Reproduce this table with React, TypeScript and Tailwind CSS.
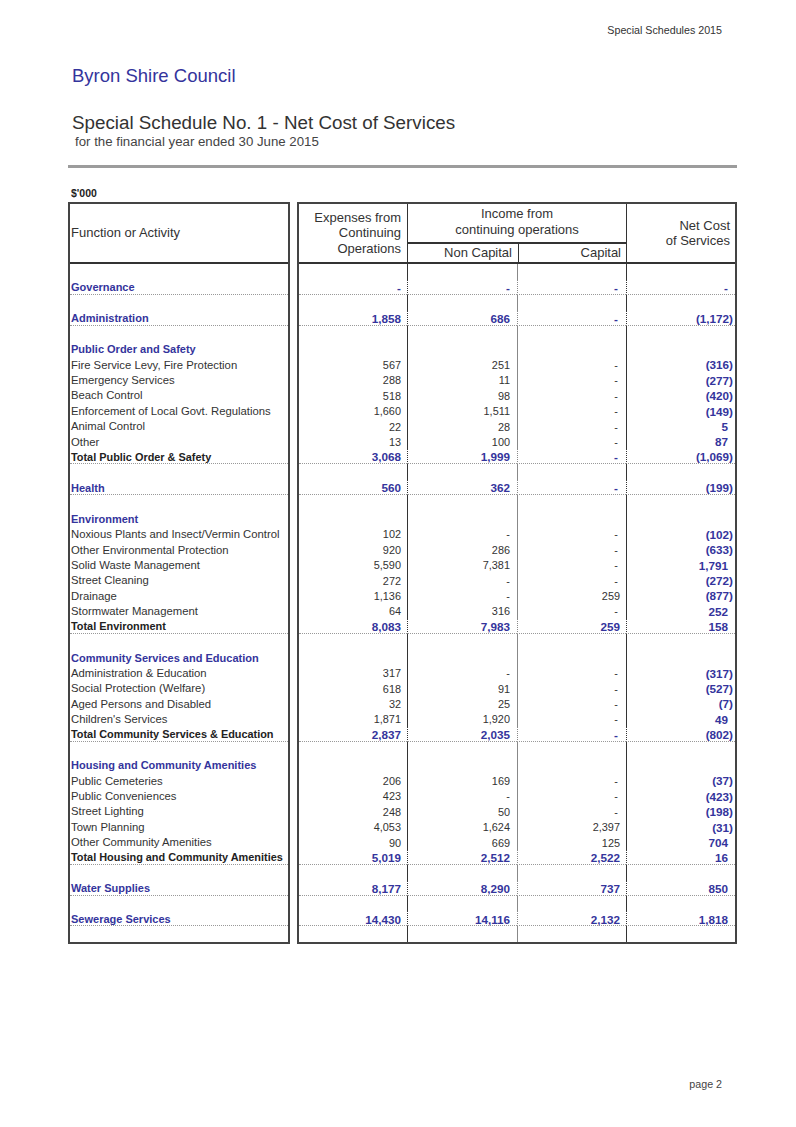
type Kind = "blank" | "major" | "section" | "item" | "total"

type Row = {
  k: Kind
  label?: string
  v?: [string, string, string, string]
}

const rows: Row[] = [
  { k: "blank" },
  { k: "major", label: "Governance", v: ["-", "-", "-", "-"] },
  { k: "blank" },
  { k: "major", label: "Administration", v: ["1,858", "686", "-", "(1,172)"] },
  { k: "blank" },
  { k: "section", label: "Public Order and Safety" },
  { k: "item", label: "Fire Service Levy, Fire Protection", v: ["567", "251", "-", "(316)"] },
  { k: "item", label: "Emergency Services", v: ["288", "11", "-", "(277)"] },
  { k: "item", label: "Beach Control", v: ["518", "98", "-", "(420)"] },
  { k: "item", label: "Enforcement of Local Govt. Regulations", v: ["1,660", "1,511", "-", "(149)"] },
  { k: "item", label: "Animal Control", v: ["22", "28", "-", "5"] },
  { k: "item", label: "Other", v: ["13", "100", "-", "87"] },
  { k: "total", label: "Total Public Order & Safety", v: ["3,068", "1,999", "-", "(1,069)"] },
  { k: "blank" },
  { k: "major", label: "Health", v: ["560", "362", "-", "(199)"] },
  { k: "blank" },
  { k: "section", label: "Environment" },
  { k: "item", label: "Noxious Plants and Insect/Vermin Control", v: ["102", "-", "-", "(102)"] },
  { k: "item", label: "Other Environmental Protection", v: ["920", "286", "-", "(633)"] },
  { k: "item", label: "Solid Waste Management", v: ["5,590", "7,381", "-", "1,791"] },
  { k: "item", label: "Street Cleaning", v: ["272", "-", "-", "(272)"] },
  { k: "item", label: "Drainage", v: ["1,136", "-", "259", "(877)"] },
  { k: "item", label: "Stormwater Management", v: ["64", "316", "-", "252"] },
  { k: "total", label: "Total Environment", v: ["8,083", "7,983", "259", "158"] },
  { k: "blank" },
  { k: "section", label: "Community Services and Education" },
  { k: "item", label: "Administration & Education", v: ["317", "-", "-", "(317)"] },
  { k: "item", label: "Social Protection (Welfare)", v: ["618", "91", "-", "(527)"] },
  { k: "item", label: "Aged Persons and Disabled", v: ["32", "25", "-", "(7)"] },
  { k: "item", label: "Children's Services", v: ["1,871", "1,920", "-", "49"] },
  { k: "total", label: "Total Community Services & Education", v: ["2,837", "2,035", "-", "(802)"] },
  { k: "blank" },
  { k: "section", label: "Housing and Community Amenities" },
  { k: "item", label: "Public Cemeteries", v: ["206", "169", "-", "(37)"] },
  { k: "item", label: "Public Conveniences", v: ["423", "-", "-", "(423)"] },
  { k: "item", label: "Street Lighting", v: ["248", "50", "-", "(198)"] },
  { k: "item", label: "Town Planning", v: ["4,053", "1,624", "2,397", "(31)"] },
  { k: "item", label: "Other Community Amenities", v: ["90", "669", "125", "704"] },
  { k: "total", label: "Total Housing and Community Amenities", v: ["5,019", "2,512", "2,522", "16"] },
  { k: "blank" },
  { k: "major", label: "Water Supplies", v: ["8,177", "8,290", "737", "850"] },
  { k: "blank" },
  { k: "major", label: "Sewerage Services", v: ["14,430", "14,116", "2,132", "1,818"] },
  { k: "blank" },
]

const hasLine = (r: Row) => r.k === "major" || r.k === "total"

function labelClass(k: Kind) {
  if (k === "major" || k === "section") return "text-[11px] font-bold text-[#34349c]"
  if (k === "total") return "text-[10.9px] font-bold text-[#222]"
  return "text-[11.3px] text-[#333]"
}

function numClass(k: Kind, col: number) {
  if (k === "item" && col < 3) return "text-[10.9px] text-[#333]"
  return "text-[11.7px] font-bold text-[#34349c]"
}

function LeftBox() {
  return (
    <div className="flex w-[222px] flex-col border-2 border-[#444]">
      <div className="flex h-[60px] items-center border-b-2 border-[#333] pl-[1px] text-[13px] text-[#333]">
        Function or Activity
      </div>
      {rows.map((r, i) => (
        <div
          key={i}
          className={`flex h-[15.41px] items-center overflow-hidden whitespace-nowrap pl-[1px] pt-[2px] ${labelClass(r.k)} ${
            hasLine(r) ? "border-b border-dotted border-[#999]" : ""
          }`}
        >
          {r.label}
        </div>
      ))}
    </div>
  )
}

function NumCell({ r, col }: { r: Row; col: number }) {
  const val = r.v ? r.v[col] : ""
  const neg = val.startsWith("(")
  const pad =
    col === 0 ? "pr-[6px]" : col === 1 ? "pr-[7px]" : col === 2 ? (val === "-" ? "pr-[8px]" : "pr-[6px]") : neg ? "pr-[2px]" : "pr-[7px]"
  const sep = col === 0 ? "" : col === 2 ? "border-l border-[#888]" : "border-l border-[#333]"
  return (
    <div
      className={`flex h-[15.41px] items-center justify-end pt-[2px] ${pad} ${sep} ${numClass(r.k, col)} ${
        hasLine(r) ? "border-b border-b-[#999] border-dotted" : ""
      }`}
    >
      {val}
    </div>
  )
}

function RightBox() {
  return (
    <div className="flex w-[440px] flex-col border-2 border-[#444]">
      <div className="grid h-[60px] grid-cols-[108px_110px_109px_109px] border-b-2 border-[#333] text-[13px] leading-[15.3px] text-[#333]">
        <div className="flex items-center justify-end pr-[6px] text-right">
          Expenses from
          <br />
          Continuing
          <br />
          Operations
        </div>
        <div className="col-span-2 flex flex-col border-l border-[#333]">
          <div className="flex h-[38px] flex-col items-center justify-center pb-[3px] text-center">
            <span>Income from</span>
            <span>continuing operations</span>
          </div>
          <div className="grid flex-1 grid-cols-[110px_108px] border-t-2 border-[#333]">
            <div className="flex items-center justify-end pr-[6px]">Non Capital</div>
            <div className="flex items-center justify-end border-l border-[#333] pr-[5px]">Capital</div>
          </div>
        </div>
        <div className="flex items-center justify-end border-l border-[#333] pr-[5px] text-right">
          Net Cost
          <br />
          of Services
        </div>
      </div>
      <div className="grid grid-cols-[108px_110px_109px_109px]">
        {rows.map((r, i) => (
          <div key={i} className="contents">
            {[0, 1, 2, 3].map((c) => (
              <NumCell key={c} r={r} col={c} />
            ))}
          </div>
        ))}
      </div>
    </div>
  )
}

export default function App() {
  return (
    <div className="min-h-[1127px] w-[796px] bg-white font-['Liberation_Sans',Arial,sans-serif]">
      <div className="ml-[68px] flex w-[669px] flex-col">
        <div className="pr-[15px] pt-[23px] text-right text-[10.7px] leading-[14px] text-[#333]">
          Special Schedules 2015
        </div>

        <h1 className="mt-[28px] pl-[4px] text-[18.5px] leading-[22px] text-[#34349c]">Byron Shire Council</h1>

        <h2 className="mt-[25px] pl-[4px] text-[18.8px] leading-[22px] text-[#333]">
          Special Schedule No. 1 - Net Cost of Services
        </h2>
        <p className="pl-[7px] text-[13.25px] leading-[16px] text-[#444]">for the financial year ended 30 June 2015</p>

        <div className="mt-[15px] h-[3px] bg-[#9c9c9c]" />

        <div className="mt-[19px] pl-[3px] text-[10.5px] font-bold leading-[13px] text-[#222]">$'000</div>

        <div className="mt-[2px] flex gap-[7px]">
          <LeftBox />
          <RightBox />
        </div>

        <div className="mt-[133px] pr-[15px] text-right text-[10.7px] leading-[14px] text-[#444]">page 2</div>
      </div>
    </div>
  )
}
